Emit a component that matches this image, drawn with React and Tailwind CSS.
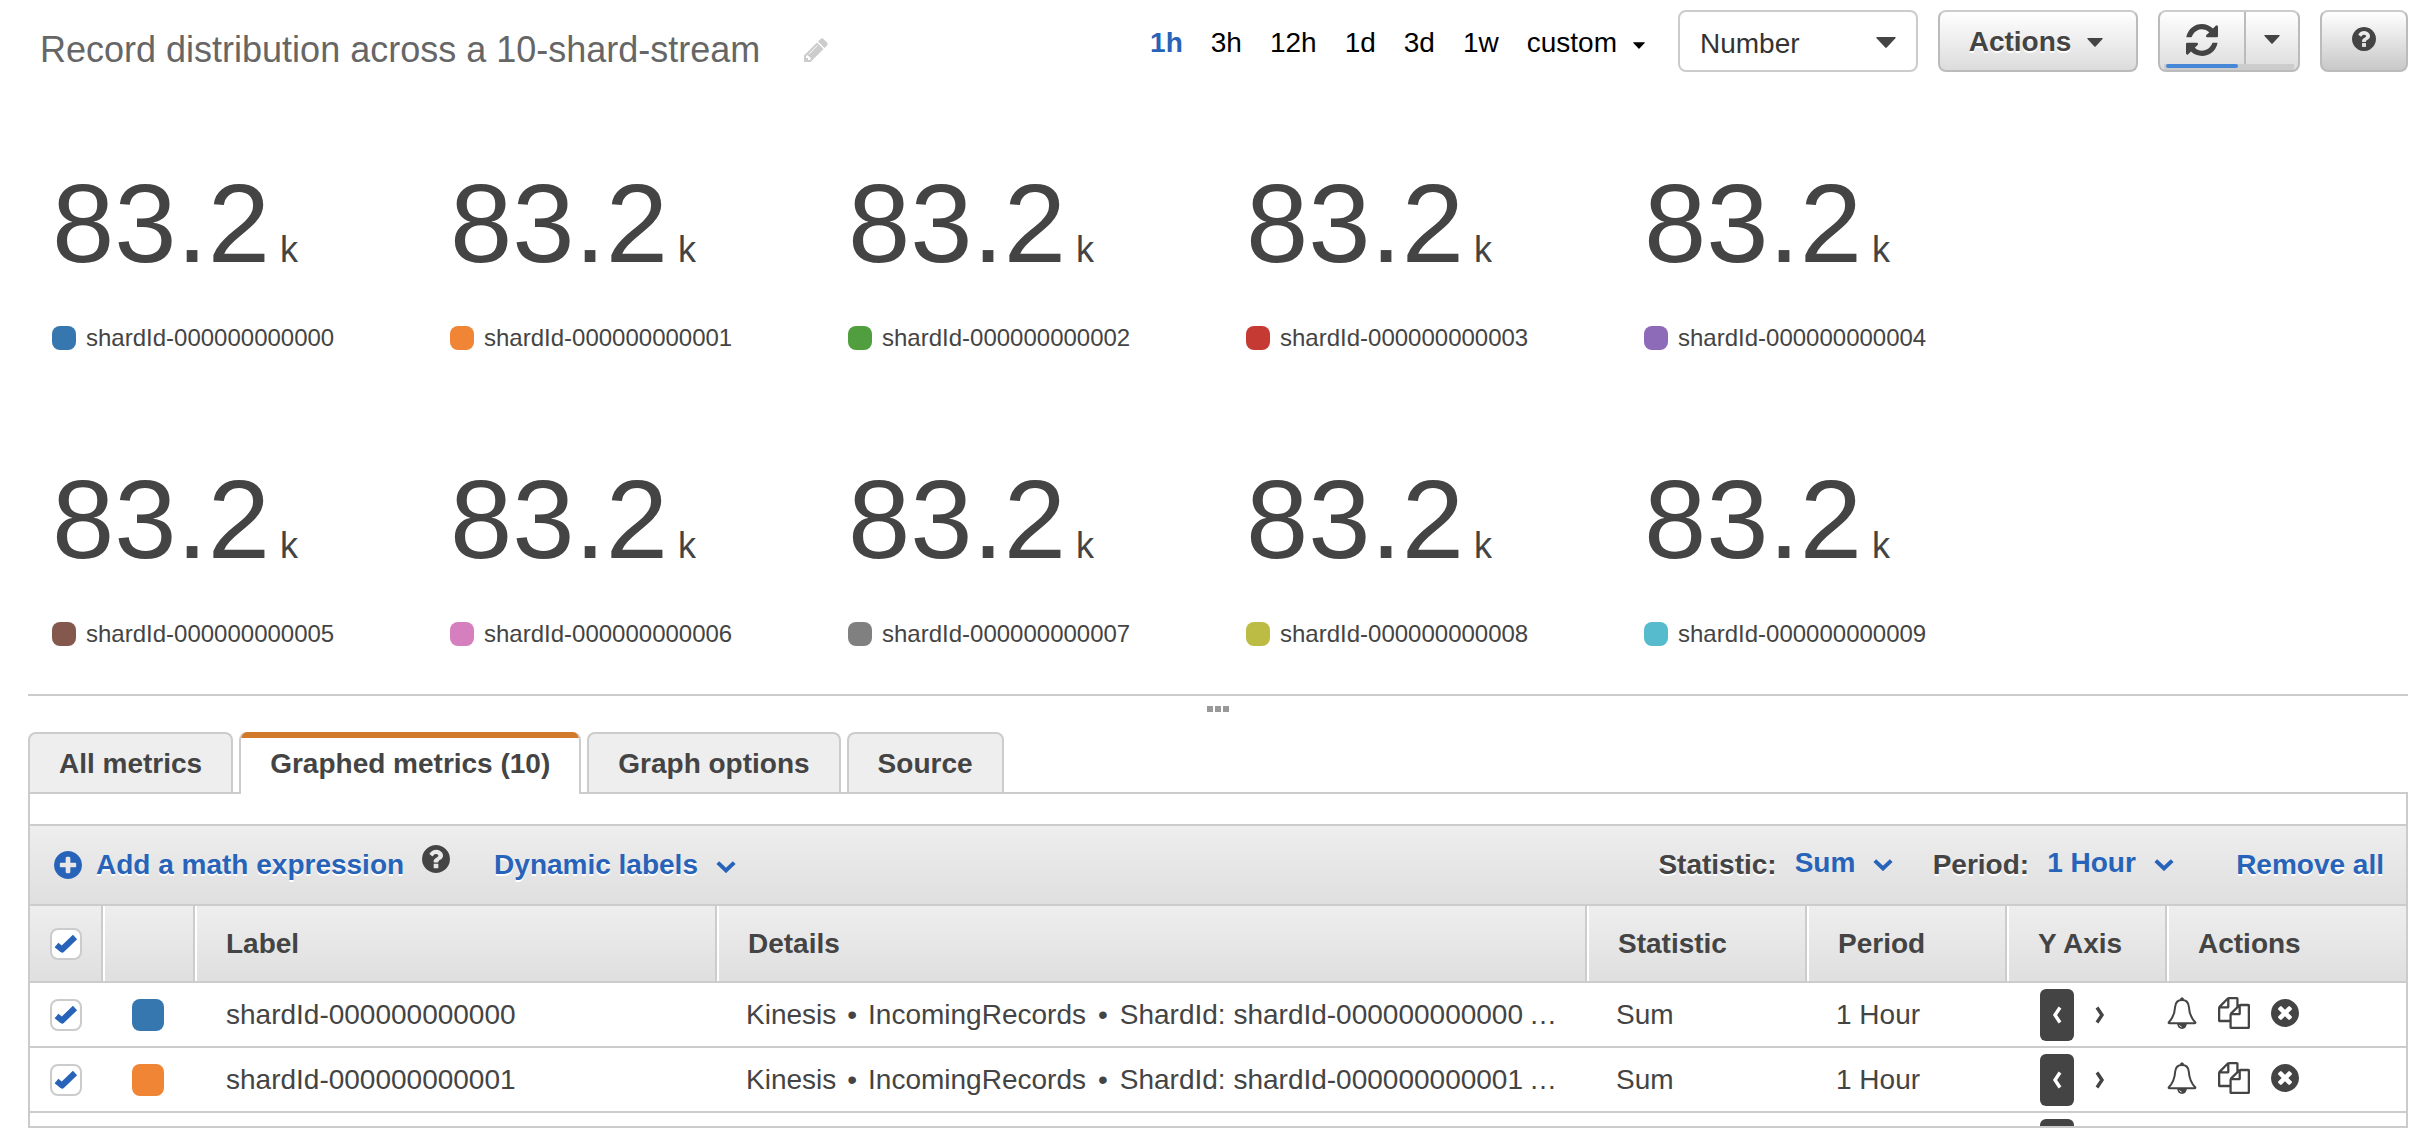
import React from "react";

const DISC =
  "q0 209-103 385.5t-279.5 279.5-385.5 103-385.5-103-279.5-279.5-103-385.5 103-385.5 279.5-279.5 385.5-103 385.5 103 279.5 279.5 103 385.5z";
const QUESTION =
  "M1024 1376v-192q0-14-9-23t-23-9h-192q-14 0-23 9t-9 23v192q0 14 9 23t23 9h192q14 0 23-9t9-23zm256-672q0-88-55.5-163t-138.5-116-170-41q-243 0-371 213-15 24 8 42l132 100q7 6 19 6 16 0 25-12 53-68 86-92 34-24 86-24 48 0 85.5 26t37.5 59q0 38-20 61t-68 45q-63 28-115.5 86.5t-52.5 125.5v36q0 14 9 23t23 9h192q14 0 23-9t9-23q0-19 21.5-49.5t54.5-49.5q32-18 49-28.5t46-35 44.5-48 28-60.5 12.5-81zm384 192" +
  DISC;
const PLUS =
  "M1344 960v-128q0-26-19-45t-45-19h-256v-256q0-26-19-45t-45-19h-128q-26 0-45 19t-19 45v256h-256q-26 0-45 19t-19 45v128q0 26 19 45t45 19h256v256q0 26 19 45t45 19h128q26 0 45-19t19-45v-256h256q26 0 45-19t19-45zm320-64" +
  DISC;
const TIMES =
  "M1277 1122q0-26-19-45l-181-181 181-181q19-19 19-45 0-27-19-46l-90-90q-19-19-46-19-26 0-45 19l-181 181-181-181q-19-19-45-19-27 0-46 19l-90 90q-19 19-19 46 0 26 19 45l181 181-181 181q-19 19-19 45 0 27 19 46l90 90q19 19 46 19 26 0 45-19l181-181 181 181q19 19 45 19 27 0 46-19l90-90q19-19 19-46zm387-226" +
  DISC;
const REFRESH =
  "M1511 928q0 5-1 7-64 268-268 434.5t-478 166.5q-146 0-282.5-55t-243.5-157l-129 129q-19 19-45 19t-45-19-19-45v-448q0-26 19-45t45-19h448q26 0 45 19t19 45-19 45l-137 137q71 66 161 102t187 36q134 0 250-65t186-179q11-17 53-117 8-23 30-23h192q13 0 22.5 9.5t9.5 22.5zm25-800v448q0 26-19 45t-45 19h-448q-26 0-45-19t-19-45 19-45l138-138q-148-137-349-137-134 0-250 65t-186 179q-11 17-53 117-8 23-30 23h-199q-13 0-22.5-9.5t-9.5-22.5v-7q65-268 270-434.5t480-166.5q146 0 284 55.5t245 156.5l130-129q19-19 45-19t45 19 19 45z";
const PENCIL =
  "M491 1536l91-91-235-235-91 91v107h128v128h107zm523-928q0-22-22-22-10 0-17 7l-542 542q-7 7-7 17 0 22 22 22 10 0 17-7l542-542q7-7 7-17zm-54-192l416 416-832 832h-416v-416zm683 96q0 53-37 90l-166 166-416-416 166-165q36-38 90-38 53 0 91 38l235 234q37 39 37 91z";
const COPY =
  "M1696 384q40 0 68 28t28 68v1216q0 40-28 68t-68 28h-960q-40 0-68-28t-28-68v-288h-544q-40 0-68-28t-28-68v-672q0-40 20-88t48-76l408-408q28-28 76-48t88-20h416q40 0 68 28t28 68v328q68-40 128-40h416zm-544 213l-299 299h299v-299zm-640-384l-299 299h299v-299zm196 647l316-316v-416h-384v416q0 40-28 68t-68 28h-416v640h512v-256q0-40 20-88t48-76zm956 804v-1152h-384v416q0 40-28 68t-68 28h-416v640h896z";

const Icon = ({ d, box = "128 128 1536 1536", className }) => (
  <svg viewBox={box} className={className} fill="currentColor" aria-hidden="true">
    <path d={d} />
  </svg>
);

const Caret = ({ className }) => (
  <svg viewBox="0 0 20 11" className={className} fill="currentColor" aria-hidden="true">
    <path d="M1.2 0h17.6q1.6 0 .6 1.2l-8.6 9.2q-.8.8-1.6 0L.6 1.2Q-.4 0 1.2 0z" />
  </svg>
);

const ChevronDown = ({ className }) => (
  <svg viewBox="0 0 20 12" className={className} fill="none" stroke="currentColor" strokeWidth="4" aria-hidden="true">
    <path d="M1.800 1.600l8.200 7.800 8.200-7.800" />
  </svg>
);

const ChevronSide = ({ d }) => (
  <svg viewBox="0 0 12 18" className="h-[18px] w-3" fill="none" stroke="currentColor" strokeWidth="3.4" aria-hidden="true">
    <path d={d} />
  </svg>
);

const Bell = () => (
  <svg viewBox="0 0 30 32" className="h-8 w-[30px]" fill="none" stroke="currentColor" strokeWidth="2" strokeLinejoin="round" aria-hidden="true">
    <path d="M15 3C10.500 3 8.600 5.600 8.200 9.500C7.800 16 6.500 20.500 1.800 25.200Q1.200 26.300 2.500 26.300H27.500Q28.800 26.300 28.200 25.200C23.500 20.500 22.200 16 21.800 9.500C21.400 5.600 19.500 3 15 3z" />
    <path d="M13.500 2.800V1.500Q15 -.3 16.500 1.500V2.800z" fill="currentColor" strokeWidth="0.500" />
    <path d="M11.200 27.200Q11.800 31 15 31Q18.200 31 18.800 27.200z" fill="currentColor" />
    <path d="M12.600 28.300Q13.200 29.800 14.600 30" stroke="#fff" strokeWidth="1" />
  </svg>
);

const METRICS = [
  ["shardId-000000000000", "bg-[#3777b0]"],
  ["shardId-000000000001", "bg-[#f08536]"],
  ["shardId-000000000002", "bg-[#519e3e]"],
  ["shardId-000000000003", "bg-[#c53a32]"],
  ["shardId-000000000004", "bg-[#8d6bb8]"],
  ["shardId-000000000005", "bg-[#84584d]"],
  ["shardId-000000000006", "bg-[#d57fbe]"],
  ["shardId-000000000007", "bg-[#808080]"],
  ["shardId-000000000008", "bg-[#bcbc44]"],
  ["shardId-000000000009", "bg-[#56bccd]"],
];

function Check({ label }) {
  return (
    <span className="relative ml-5 block size-8">
      <input
        type="checkbox"
        defaultChecked
        aria-label={label}
        className="peer block size-8 appearance-none rounded-lg border-2 border-[#ccc] bg-white"
      />
      <svg
        viewBox="0 0 32 32"
        className="pointer-events-none absolute inset-0 hidden size-8 text-[#2763b8] peer-checked:block"
        fill="none"
        stroke="currentColor"
        strokeWidth="6"
        strokeLinejoin="round"
        aria-hidden="true"
      >
        <path d="M6.500 17L12 21.500L25 9" />
      </svg>
    </span>
  );
}

const BUTTON =
  "rounded-lg border-2 border-[#bbb] border-t-[#ccc] bg-linear-to-b from-white text-[#444]";

function Header() {
  return (
    <header className="flex items-start justify-between pt-2.5 pr-5 pl-10">
      <div className="flex items-center gap-11 pt-[18px]">
        <h1 className="text-4xl leading-[44px] text-[#666]">Record distribution across a 10-shard-stream</h1>
        <button type="button" aria-label="Edit title" className="text-[#ccc]">
          <Icon d={PENCIL} className="size-6" />
        </button>
      </div>
      <div className="flex items-center gap-5">
        <nav aria-label="Time range" className="mr-[13px] flex items-center gap-7 pt-1 text-[28px] leading-8 text-black">
          <button type="button" className="font-bold text-[#2763b8]">1h</button>
          <button type="button">3h</button>
          <button type="button">12h</button>
          <button type="button">1d</button>
          <button type="button">3d</button>
          <button type="button">1w</button>
          <button type="button" className="flex items-center gap-4">
            custom
            <Caret className="mt-1 h-[7px] w-3" />
          </button>
        </nav>
        <div className="relative">
          <select
            aria-label="Graph type"
            className="block h-[62px] w-60 appearance-none rounded-lg border-2 border-[#ccc] bg-white px-5 pt-1.5 text-[28px] text-[#333]"
          >
            <option>Number</option>
          </select>
          <Caret className="pointer-events-none absolute top-[27px] right-[22px] h-[11px] w-5 text-[#444]" />
        </div>
        <button
          type="button"
          className={`flex h-[62px] w-[200px] items-center justify-center gap-4 pt-0.5 pr-1 text-[28px] font-bold [text-shadow:0_2px_0_#fff] to-[#dcdcdc] ${BUTTON}`}
        >
          Actions
          <Caret className="h-[9px] w-4" />
        </button>
        <div className={`relative flex h-[62px] w-[142px] overflow-hidden to-[#dcdcdc] ${BUTTON}`}>
          <button type="button" aria-label="Refresh" className="flex w-[86px] justify-center border-r-2 border-[#bbb] pt-3">
            <Icon d={REFRESH} box="0 0 1536 1536" className="size-8" />
          </button>
          <button type="button" aria-label="Refresh options" className="flex flex-1 justify-center pt-[23px]">
            <Caret className="h-[9px] w-4" />
          </button>
          <div className="absolute inset-x-1 bottom-0 h-1.5 bg-[#ccc]">
            <div className="ml-0.5 h-1 w-[72px] rounded-full bg-[#4787d8]" />
          </div>
        </div>
        <button
          type="button"
          aria-label="Help"
          className={`flex h-[62px] w-[88px] justify-center pt-[15px] to-[#c8c8c8] ${BUTTON}`}
        >
          <Icon d={QUESTION} className="size-6" />
        </button>
      </div>
    </header>
  );
}

function Numbers() {
  return (
    <main className="grid grid-cols-[repeat(5,minmax(0,398px))] gap-y-[114px] pt-24 pb-12 pl-[52px] text-[#444]">
      {METRICS.map(([name, color]) => (
        <div key={name}>
          <div className="flex items-baseline gap-2.5 text-[112px] leading-[112px]">
            83.2<span className="text-4xl">k</span>
          </div>
          <div className="mt-[46px] flex items-center gap-2.5 text-2xl leading-6">
            <span className={`size-6 rounded-lg ${color}`} />
            {name}
          </div>
        </div>
      ))}
    </main>
  );
}

const TAB =
  "h-[60px] rounded-t-lg border-2 border-b-0 border-[#ccc] bg-[#eee] px-[29px] pt-0.5 text-[28px] font-bold text-[#444]";

function Tabs() {
  return (
    <div role="tablist" className="flex gap-1.5">
      <button type="button" role="tab" aria-selected="false" className={TAB}>All metrics</button>
      <button
        type="button"
        role="tab"
        aria-selected="true"
        className="relative z-10 -mb-0.5 h-[62px] overflow-hidden rounded-t-lg border-x-2 border-[#ccc] bg-white px-[29px] pt-0.5 text-[28px] font-bold text-[#444]"
      >
        <span className="absolute -inset-x-0.5 top-0 h-1.5 bg-[#d27a2c]" />
        Graphed metrics (10)
      </button>
      <button type="button" role="tab" aria-selected="false" className={TAB}>Graph options</button>
      <button type="button" role="tab" aria-selected="false" className={TAB}>Source</button>
    </div>
  );
}

function LinkSelect({ id, label, value, className }) {
  return (
    <div className="flex items-center gap-[18px]">
      <label htmlFor={id} className="[text-shadow:0_2px_0_#fff]">{label}</label>
      <div className="relative mb-1">
        <select id={id} className={`block appearance-none text-[#2763b8] ${className}`}>
          <option>{value}</option>
        </select>
        <ChevronDown className="pointer-events-none absolute top-3 right-0 h-3 w-5 text-[#2763b8]" />
      </div>
    </div>
  );
}

function Toolbar() {
  return (
    <div className="flex h-[82px] items-center border-y-2 border-[#ccc] bg-linear-to-b from-[#eee] to-[#dfdfdf] pr-[22px] pl-6 text-[28px] leading-8 font-bold text-[#444]">
      <button type="button" className="flex items-center gap-3.5 text-[#2763b8] [text-shadow:0_2px_0_#fff]">
        <Icon d={PLUS} className="size-7" />
        Add a math expression
      </button>
      <button type="button" aria-label="Math expression help" className="mb-3 ml-[18px]">
        <Icon d={QUESTION} className="size-7" />
      </button>
      <button type="button" className="ml-11 flex items-center gap-[18px] text-[#2763b8] [text-shadow:0_2px_0_#fff]">
        Dynamic labels
        <ChevronDown className="mt-1 h-3 w-5" />
      </button>
      <div className="ml-auto flex items-center gap-10">
        <LinkSelect id="statistic" label="Statistic:" value="Sum" className="w-[98px]" />
        <LinkSelect id="period" label="Period:" value="1 Hour" className="w-[127px]" />
        <button type="button" className="ml-[22px] text-[#2763b8] [text-shadow:0_2px_0_#fff]">Remove all</button>
      </div>
    </div>
  );
}

const TH = "border-r-2 border-b-2 border-[#ccc] pl-[31px] text-left shadow-[inset_2px_0_0_#fff]";

function AxisSwitch() {
  return (
    <div className="flex items-center gap-5 pl-[34px]">
      <button type="button" aria-label="Left axis" className="flex h-[52px] w-[34px] items-center justify-center rounded-md bg-[#444] text-white">
        <ChevronSide d="M9 1.500L4 9L9 16.500" />
      </button>
      <button type="button" aria-label="Right axis">
        <ChevronSide d="M3 1.500L8 9L3 16.500" />
      </button>
    </div>
  );
}

function MetricRow({ name, color }) {
  return (
    <tr className="h-[65px] border-b-2 border-[#ccc]">
      <td><Check label={`Show ${name}`} /></td>
      <td><span className={`mx-auto block size-8 rounded-lg ${color}`} /></td>
      <td className="pl-8">{name}</td>
      <td className="truncate pl-[30px]">
        Kinesis<span className="px-[11px]">•</span>IncomingRecords<span className="px-3">•</span>ShardId: {name}
        <span className="pl-1.5">…</span>
      </td>
      <td className="pl-[30px]">Sum</td>
      <td className="pl-[30px]">1 Hour</td>
      <td><AxisSwitch /></td>
      <td>
        <div className="mb-1 flex items-center gap-[21px] pl-px">
          <button type="button" aria-label="Create alarm"><Bell /></button>
          <button type="button" aria-label="Duplicate metric"><Icon d={COPY} box="0 0 1792 1792" className="size-8" /></button>
          <button type="button" aria-label="Remove metric"><Icon d={TIMES} className="size-7" /></button>
        </div>
      </td>
    </tr>
  );
}

export default function App() {
  return (
    <div className="flex h-screen flex-col overflow-hidden bg-white font-['Liberation_Sans',Arial,sans-serif]">
      <Header />
      <Numbers />
      <section className="mr-5 ml-7 flex min-h-0 flex-1 flex-col">
        <div className="flex h-[38px] shrink-0 justify-center gap-0.5 border-t-2 border-[#ccc] pt-2.5">
          <span className="size-1.5 bg-[#999]" />
          <span className="size-1.5 bg-[#999]" />
          <span className="size-1.5 bg-[#999]" />
        </div>
        <Tabs />
        <div className="min-h-0 flex-1 overflow-hidden border-2 border-[#ccc] pt-[30px]">
          <Toolbar />
          <table className="w-full table-fixed border-collapse text-[28px] leading-8 text-[#444]">
            <colgroup>
              <col className="w-[72px]" />
              <col className="w-[92px]" />
              <col className="w-[522px]" />
              <col />
              <col className="w-[220px]" />
              <col className="w-[200px]" />
              <col className="w-[160px]" />
              <col className="w-[240px]" />
            </colgroup>
            <thead>
              <tr className="h-[76px] bg-linear-to-b from-[#eee] to-[#dfdfdf]">
                <th className="border-r-2 border-b-2 border-[#ccc]"><Check label="Show all metrics" /></th>
                <th className={TH} aria-label="Color" />
                <th className={TH}>Label</th>
                <th className={TH}>Details</th>
                <th className={TH}>Statistic</th>
                <th className={TH}>Period</th>
                <th className={TH}>Y Axis</th>
                <th className="border-b-2 border-[#ccc] pl-[31px] text-left shadow-[inset_2px_0_0_#fff]">Actions</th>
              </tr>
            </thead>
            <tbody>
              {METRICS.slice(0, 2).map(([name, color]) => (
                <MetricRow key={name} name={name} color={color} />
              ))}
              <tr className="h-[65px]">
                <td colSpan={6} />
                <td><AxisSwitch /></td>
                <td />
              </tr>
            </tbody>
          </table>
        </div>
      </section>
    </div>
  );
}
